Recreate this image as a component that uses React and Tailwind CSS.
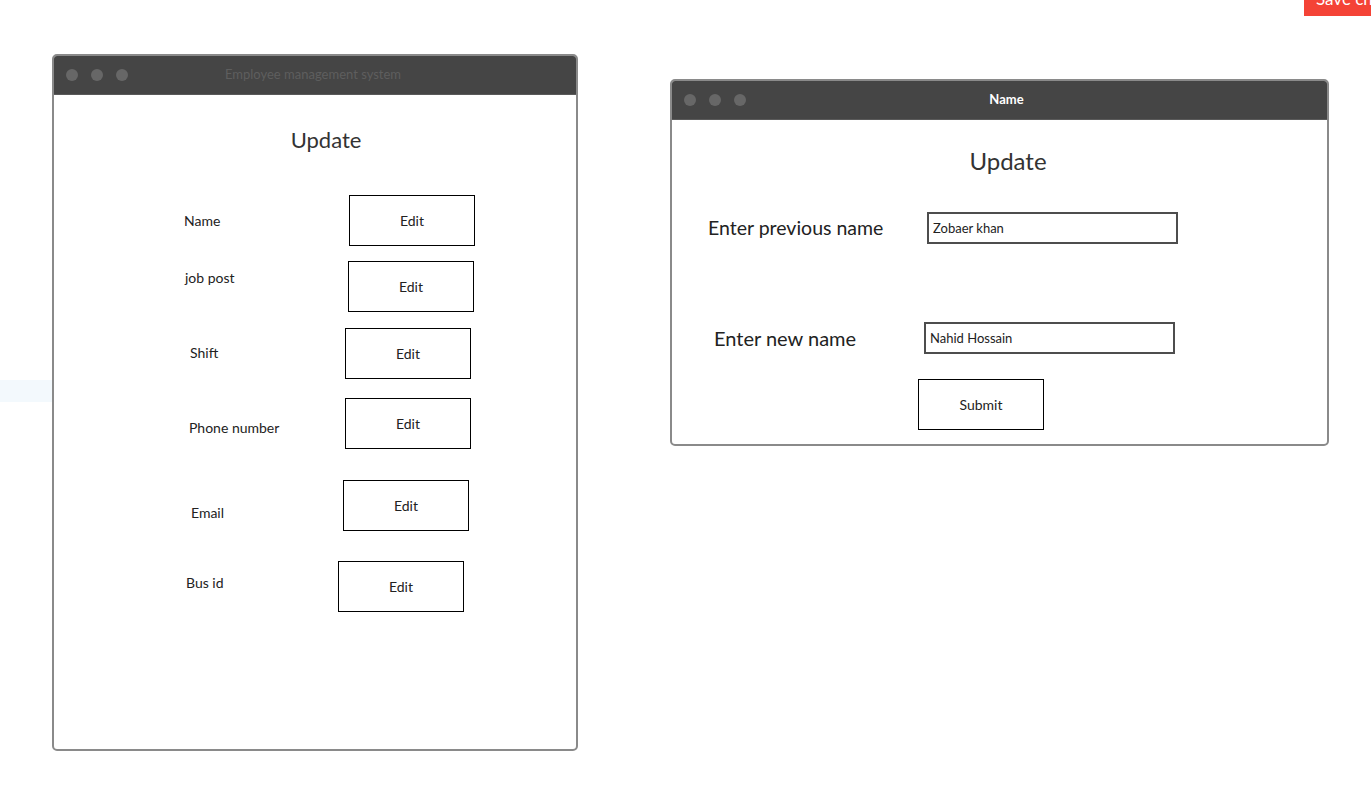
import React from 'react';

const fields = [
  { label: 'Name', rowCls: 'mt-[40px]', labelCls: 'ml-[130px] w-[165px] mt-[16px]' },
  { label: 'job post', rowCls: 'mt-[15px]', labelCls: 'ml-[131px] w-[163px] mt-[7px]' },
  { label: 'Shift', rowCls: 'mt-[16px]', labelCls: 'ml-[136px] w-[155px] mt-[15px]' },
  { label: 'Phone number', rowCls: 'mt-[19px]', labelCls: 'ml-[135px] w-[156px] mt-[20px]' },
  { label: 'Email', rowCls: 'mt-[31px]', labelCls: 'ml-[137px] w-[152px] mt-[23px]' },
  { label: 'Bus id', rowCls: 'mt-[30px]', labelCls: 'ml-[132px] w-[152px] mt-[12px]' },
];

const TitleBar = ({ title, bold }) => (
  <div className="h-[39px] bg-[#454545] border-b border-[#5a5a5a] grid grid-cols-[1fr_auto_1fr] items-center">
    <div className="flex items-center gap-[13px] pl-[12px]">
      <span className="w-[12px] h-[12px] rounded-full bg-[#676767]" />
      <span className="w-[12px] h-[12px] rounded-full bg-[#676767]" />
      <span className="w-[12px] h-[12px] rounded-full bg-[#676767]" />
    </div>
    {bold ? (
      <div className="pl-[14px] text-[13px] font-bold text-white">{title}</div>
    ) : (
      <div className="pr-[4px] text-[13px] text-[#5e5e5e]">{title}</div>
    )}
    <div />
  </div>
);

const BoxButton = ({ children }) => (
  <button
    type="button"
    className="w-[126px] h-[51px] shrink-0 border border-black bg-white text-[14px] text-[#222] flex items-center justify-center"
  >
    {children}
  </button>
);

const App = () => {
  return (
    <div className="relative w-full h-[804px] bg-white overflow-hidden font-['Lato','Open_Sans',sans-serif]">
      {/* faint strip behind the left window */}
      <div className="absolute left-0 top-[380px] w-[52px] h-[22px] bg-[#f3f9fd]" />

      {/* Save button cut off at top-right */}
      <div className="absolute top-0 right-0 w-[67px] h-[16px] bg-[#f44336] overflow-hidden">
        <div className="pl-[12px] -mt-[13px] text-[17px] leading-[24px] text-white whitespace-nowrap">Save changes</div>
      </div>

      <div className="relative flex items-start">
        {/* Employee management window */}
        <div className="ml-[52px] mt-[54px] w-[526px] h-[697px] border-2 border-[#8a8a8a] rounded-[5px] overflow-hidden bg-white flex flex-col">
          <TitleBar title="Employee management system" />
          <h2 className="mt-[30px] pl-[22px] text-center text-[22px] leading-[30px] text-[#333]">Update</h2>
          {fields.map((f) => (
            <div key={f.label} className={`flex items-start ${f.rowCls}`}>
              <div className={`shrink-0 text-[14px] leading-[20px] text-[#222] ${f.labelCls}`}>{f.label}</div>
              <BoxButton>Edit</BoxButton>
            </div>
          ))}
        </div>

        {/* Name update window */}
        <div className="ml-[92px] mt-[79px] w-[659px] h-[367px] border-2 border-[#8a8a8a] rounded-[5px] overflow-hidden bg-white flex flex-col">
          <TitleBar title="Name" bold />
          <h2 className="mt-[25px] pl-[17px] text-center text-[24px] leading-[32px] text-[#333]">Update</h2>

          <div className="mt-[35px] flex items-start">
            <label className="ml-[36px] w-[219px] shrink-0 mt-[2px] text-[19.5px] leading-[28px] text-[#222]">Enter previous name</label>
            <input
              readOnly
              value="Zobaer khan"
              className="w-[251px] h-[32px] border-2 border-[#4d4d4d] pl-[4px] text-[13px] text-[#222] outline-none"
            />
          </div>

          <div className="mt-[78px] flex items-start">
            <label className="ml-[42px] w-[210px] shrink-0 mt-[2px] text-[20px] leading-[28px] text-[#222]">Enter new name</label>
            <input
              readOnly
              value="Nahid Hossain"
              className="w-[251px] h-[32px] border-2 border-[#4d4d4d] pl-[4px] text-[13px] text-[#222] outline-none"
            />
          </div>

          <div className="mt-[25px] pl-[246px]">
            <BoxButton>Submit</BoxButton>
          </div>
        </div>
      </div>
    </div>
  );
};

export default App;
